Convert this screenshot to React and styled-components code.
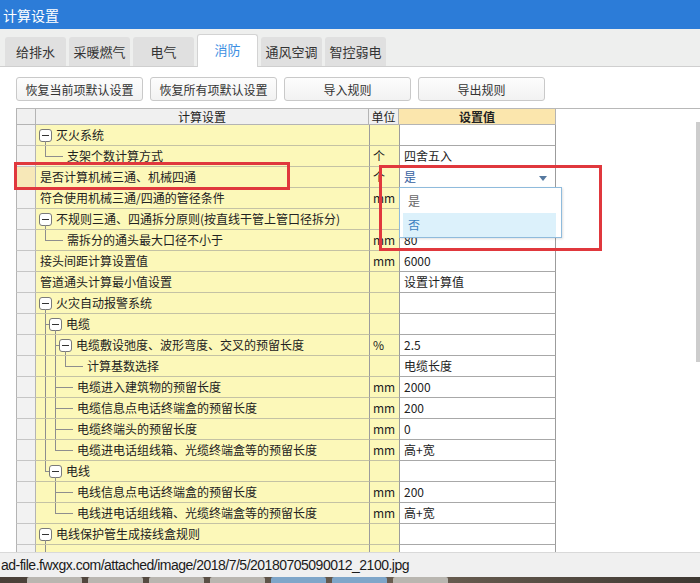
import React from 'react';
import styled, { createGlobalStyle, css } from 'styled-components';

const GlobalStyle = createGlobalStyle`
  html, body {
    margin: 0;
    padding: 0;
    background: #ffffff;
  }
  body {
    font-family: "Noto Sans CJK SC", "Liberation Sans", sans-serif;
    color: #222;
  }
`;

const tabs = ['给排水', '采暖燃气', '电气', '消防', '通风空调', '智控弱电'];
const actions = ['恢复当前项默认设置', '恢复所有项默认设置', '导入规则', '导出规则'];

// g = tree guides in front of the row: pipe | tee | elbow | blank
const rows = [
    { g: [], box: true, text: '灭火系统' },
    { g: ['elbow'], leaf: true, text: '支架个数计算方式', unit: '个', value: '四舍五入' },
    { g: [], text: '是否计算机械三通、机械四通', unit: '个', value: '是', select: true },
    { g: [], text: '符合使用机械三通/四通的管径条件', unit: 'mm', value: '' },
    { g: [], box: true, text: '不规则三通、四通拆分原则(按直线干管上管口径拆分)' },
    { g: ['elbow'], leaf: true, text: '需拆分的通头最大口径不小于', unit: 'mm', value: '80' },
    { g: [], text: '接头间距计算设置值', unit: 'mm', value: '6000' },
    { g: [], text: '管道通头计算最小值设置', value: '设置计算值' },
    { g: [], box: true, text: '火灾自动报警系统' },
    { g: ['tee'], box: true, text: '电缆' },
    { g: ['pipe', 'tee'], box: true, text: '电缆敷设弛度、波形弯度、交叉的预留长度', unit: '%', value: '2.5' },
    { g: ['pipe', 'pipe', 'elbow'], leaf: true, text: '计算基数选择', value: '电缆长度' },
    { g: ['pipe', 'tee'], leaf: true, text: '电缆进入建筑物的预留长度', unit: 'mm', value: '2000' },
    { g: ['pipe', 'tee'], leaf: true, text: '电缆信息点电话终端盒的预留长度', unit: 'mm', value: '200' },
    { g: ['pipe', 'tee'], leaf: true, text: '电缆终端头的预留长度', unit: 'mm', value: '0' },
    { g: ['pipe', 'elbow'], leaf: true, text: '电缆进电话组线箱、光缆终端盒等的预留长度', unit: 'mm', value: '高+宽' },
    { g: ['elbow'], box: true, text: '电线' },
    { g: ['blank', 'tee'], leaf: true, text: '电线信息点电话终端盒的预留长度', unit: 'mm', value: '200' },
    { g: ['blank', 'elbow'], leaf: true, text: '电线进电话组线箱、光缆终端盒等的预留长度', unit: 'mm', value: '高+宽' },
    { g: [], box: true, text: '电线保护管生成接线盒规则' },
    // last row is cut off by the status bar
    { g: ['tee'], leaf: true, text: '' },
];

const App = () => {
    return (
        <Window>
            <GlobalStyle />
            <TitleBar>计算设置</TitleBar>

            <TabStrip>
                {tabs.map(t => (
                    <Tab key={t} $active={t === '消防'}>{t}</Tab>
                ))}
            </TabStrip>

            <Content>
                <ButtonBar>
                    {actions.map(a => <ActionButton key={a}>{a}</ActionButton>)}
                </ButtonBar>

                <GridFrame>
                    <HeaderRow>
                        <HeadCell />
                        <HeadCell>计算设置</HeadCell>
                        <HeadCell>单位</HeadCell>
                        <HeadCell $accent>设置值</HeadCell>
                    </HeaderRow>

                    {rows.map((row, i) => (
                        <Row key={i}>
                            <RowHead $selected={row.select} />
                            <TreeCell>
                                {row.g.map((kind, j) => (
                                    <Guide
                                        key={j}
                                        $kind={kind}
                                        $long={row.leaf && j === row.g.length - 1}
                                    />
                                ))}
                                {row.box && (
                                    <BoxWrap>
                                        <Expander />
                                    </BoxWrap>
                                )}
                                <NodeText $gap={row.box || row.leaf ? 4 : 1}>{row.text}</NodeText>
                            </TreeCell>
                            <UnitCell>{row.unit}</UnitCell>
                            <ValueCell>
                                {row.select ? (
                                    <>
                                        <SelectText>{row.value}</SelectText>
                                        <Caret />
                                        <DropList>
                                            <DropItem>是</DropItem>
                                            <DropItem $hover>否</DropItem>
                                        </DropList>
                                    </>
                                ) : row.value}
                            </ValueCell>
                        </Row>
                    ))}
                </GridFrame>

                <Mark $left={14} $top={95} $w={276} $h={28} />
                <Mark $left={379} $top={98} $w={223} $h={86} />
                <ScrollThumb />
            </Content>

            <StatusBar>ad-file.fwxgx.com/attached/image/2018/7/5/20180705090012_2100.jpg</StatusBar>
            <Taskbar>
                {[0, 1, 2, 3, 4, 5, 6].map(n => <TaskTile key={n} $blue={n === 4 || n === 5} />)}
            </Taskbar>
        </Window>
    )
}

const Window = styled.div`
    width: 700px;
    height: 583px;
    display: flex;
    flex-direction: column;
    overflow: hidden;
    background: #fff;
`

const TitleBar = styled.div`
    height: 29px;
    flex: none;
    display: flex;
    align-items: center;
    padding-left: 3px;
    background: #2c7cd8;
    color: #fff;
    font-size: 14px;
`

const TabStrip = styled.div`
    height: 38px;
    flex: none;
    box-sizing: border-box;
    display: flex;
    align-items: flex-end;
    gap: 3px;
    padding-left: 5px;
    background: #eeefee;
    border-bottom: 1px solid #cfcfcf;
`

const Tab = styled.div`
    width: 61px;
    height: 29px;
    box-sizing: border-box;
    display: flex;
    align-items: center;
    justify-content: center;
    background: #e0e0e0;
    border-radius: 3px 3px 0 0;
    font-size: 13px;
    color: #333;

    ${p => p.$active && css`
        height: 33px;
        margin-bottom: -1px;
        background: #fff;
        color: #3d8fe2;
        border: 1px solid #d3d3d3;
        border-bottom: none;
        padding-bottom: 4px;
    `}
`

const Content = styled.div`
    flex: 1;
    position: relative;
    overflow: hidden;
    background: #fff;
`

const ButtonBar = styled.div`
    display: flex;
    gap: 7px;
    padding: 10px 0 0 16px;
`

const ActionButton = styled.button`
    width: 127px;
    height: 24px;
    padding: 0;
    box-sizing: border-box;
    border: 1px solid #c9c9c9;
    border-radius: 3px;
    background: linear-gradient(#fdfdfd, #f2f2f2);
    font-family: inherit;
    font-size: 12px;
    color: #333;
`

const GridFrame = styled.div`
    margin: 7px 0 0 16px;
    border-top: 1px solid #b8b8b8;
    font-size: 12px;
`

const columns = css`
    display: grid;
    grid-template-columns: 20px 333px 30px 157px;
`

const HeaderRow = styled.div`
    ${columns};
    height: 16px;
    line-height: 15px;
`

const HeadCell = styled.div`
    box-sizing: border-box;
    text-align: center;
    background: ${p => p.$accent ? '#fbe6ad' : '#f0f0f0'};
    font-weight: ${p => p.$accent ? 700 : 400};
    border-right: 1px solid #b4b4b4;
    border-bottom: 1px solid #b4b4b4;

    &:first-child {
        border-left: 1px solid #b4b4b4;
    }
`

const Row = styled.div`
    ${columns};
    height: 21px;
    line-height: 20px;
`

const RowHead = styled.div`
    box-sizing: border-box;
    background: ${p => p.$selected ? '#f7e8b8' : '#f2f2f2'};
    border-left: 1px solid #b4b4b4;
    border-right: 1px solid #b4b4b4;
    border-bottom: 1px solid #c6c6c6;
`

const TreeCell = styled.div`
    box-sizing: border-box;
    display: flex;
    align-items: stretch;
    padding-left: 3px;
    background: #fcf8b9;
    border-bottom: 1px solid #c4c2a4;
    white-space: nowrap;
    overflow: hidden;
`

const lineColor = '#8e8e8e';

const Guide = styled.span`
    position: relative;
    flex: none;
    width: ${p => p.$long ? 24 : 10}px;

    &::before {
        content: '';
        display: ${p => p.$kind === 'blank' ? 'none' : 'block'};
        position: absolute;
        left: 6px;
        top: 0;
        bottom: ${p => p.$kind === 'elbow' ? '50%' : '-1px'};
        border-left: 1px solid ${lineColor};
    }

    &::after {
        content: '';
        display: ${p => p.$kind === 'tee' || p.$kind === 'elbow' ? 'block' : 'none'};
        position: absolute;
        left: 6px;
        right: 0;
        top: 50%;
        border-top: 1px solid ${lineColor};
    }
`

const BoxWrap = styled.span`
    position: relative;
    flex: none;
    width: 13px;
    display: flex;
    align-items: center;

    &::after {
        content: '';
        position: absolute;
        left: 6px;
        top: calc(50% + 6px);
        bottom: -1px;
        border-left: 1px solid ${lineColor};
    }
`

const Expander = styled.span`
    position: relative;
    width: 13px;
    height: 13px;
    box-sizing: border-box;
    border: 1px solid #7a7a7a;
    border-radius: 3px;
    background: #fff;

    &::before {
        content: '';
        position: absolute;
        left: 2px;
        right: 2px;
        top: 5px;
        height: 1px;
        background: #333;
    }
`

const NodeText = styled.span`
    margin-left: ${p => p.$gap}px;
    color: #222;
`

const UnitCell = styled.div`
    box-sizing: border-box;
    padding-left: 3px;
    background: #fcf8b9;
    border-left: 1px solid #9c9c9c;
    border-bottom: 1px solid #c4c2a4;
    color: #222;
`

const ValueCell = styled.div`
    position: relative;
    box-sizing: border-box;
    display: flex;
    align-items: center;
    padding: 0 8px 0 4px;
    background: #fff;
    border-left: 1px solid #9c9c9c;
    border-right: 1px solid #9c9c9c;
    border-bottom: 1px solid #a8a8a8;
    color: #222;
`

const SelectText = styled.span`
    flex: 1;
    color: #34609f;
`

const Caret = styled.span`
    width: 0;
    height: 0;
    border-left: 4px solid transparent;
    border-right: 4px solid transparent;
    border-top: 5px solid #56799f;
    margin-top: 2px;
`

const DropList = styled.div`
    position: absolute;
    z-index: 5;
    top: 100%;
    left: -1px;
    width: 163px;
    height: 51px;
    box-sizing: border-box;
    padding: 1px 5px 1px 3px;
    background: #fff;
    border: 1px solid #8fbbdc;
    box-shadow: 1px 1px 2px rgba(0, 0, 0, 0.12);
`

const DropItem = styled.div`
    height: 24px;
    line-height: 24px;
    padding-left: 5px;
    color: ${p => p.$hover ? '#3a7fc0' : '#666'};
    background: ${p => p.$hover ? '#dcf1fb' : 'transparent'};
`

const Mark = styled.div`
    position: absolute;
    z-index: 10;
    left: ${p => p.$left}px;
    top: ${p => p.$top}px;
    width: ${p => p.$w}px;
    height: ${p => p.$h}px;
    box-sizing: border-box;
    border: 3px solid #e0383d;
    pointer-events: none;
`

const ScrollThumb = styled.div`
    position: absolute;
    right: 0;
    top: 55px;
    width: 4px;
    height: 240px;
    background: #cdcdcd;
`

const StatusBar = styled.div`
    height: 25px;
    flex: none;
    box-sizing: border-box;
    display: flex;
    align-items: center;
    padding-left: 1px;
    background: #f0f0f0;
    border-top: 1px solid #d9d9d9;
    font-family: "Liberation Sans", Arial, sans-serif;
    font-size: 14px;
    letter-spacing: -0.5px;
    color: #1a1a1a;
    white-space: nowrap;
`

const Taskbar = styled.div`
    height: 6px;
    flex: none;
    display: flex;
    gap: 6px;
    padding-left: 27px;
    background: linear-gradient(90deg, #4a4038, #6b5f52 60%, #3e3832);
`

const TaskTile = styled.span`
    width: 55px;
    background: ${p => p.$blue ? '#7fa6c9' : '#b9b6b0'};
    border-radius: 2px 2px 0 0;
`

export default App;
